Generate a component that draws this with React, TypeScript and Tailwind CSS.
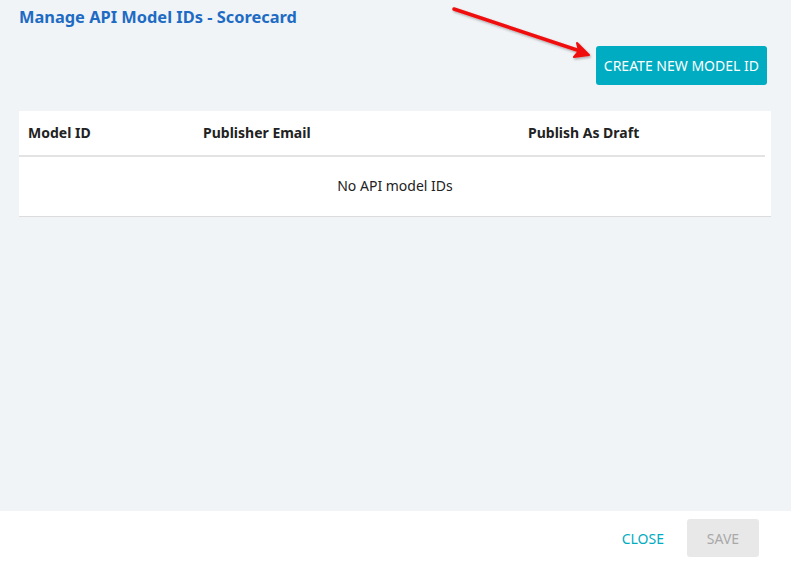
import React from "react";

export default function App() {
  return (
    <div
      className="relative flex h-[561px] w-[791px] flex-col overflow-hidden bg-[#f0f4f7]"
      style={{ fontFamily: '"Noto Sans", "Open Sans", sans-serif' }}
    >
      <div className="flex flex-1 flex-col pl-[19px] pr-[20px]">
        <h1 className="mt-[5px] h-[24px] text-[16.4px] font-bold leading-[24px] text-[#1e6bc4]">
          Manage API Model IDs - Scorecard
        </h1>
        <div className="mt-[17px] flex justify-end pr-[4px]">
          <button className="h-[39px] rounded-[3px] bg-[#00acc1] px-[8px] text-[14px] leading-[39px] text-white">
            CREATE NEW MODEL ID
          </button>
        </div>
        <div className="mt-[26px] bg-white border-b border-[#dcdcdc]">
          <div className="mr-[6px] grid h-[46px] grid-cols-[175px_325px_1fr] items-center border-b-2 border-[#e3e3e3] pb-[2px] pl-[9px] text-[14px] font-bold text-[#222]">
            <div>Model ID</div>
            <div>Publisher Email</div>
            <div>Publish As Draft</div>
          </div>
          <div className="flex h-[59px] items-center justify-center pb-[2px] text-[14px] text-[#222]">
            No API model IDs
          </div>
        </div>
      </div>
      <div className="flex h-[50px] items-start justify-end bg-white pr-[32px] pt-[8px]">
        <button className="mr-[23px] h-[38px] text-[14px] text-[#00acc1]">CLOSE</button>
        <button className="h-[38px] w-[72px] rounded-[3px] bg-[#e8e8e8] text-[14px] text-[#a9a9a9]">
          SAVE
        </button>
      </div>
      <svg
        className="pointer-events-none absolute left-0 top-0"
        width="791"
        height="561"
        viewBox="0 0 791 561"
      >
        <defs>
          <filter id="sh" x="-20%" y="-20%" width="140%" height="140%">
            <feDropShadow dx="1" dy="1.5" stdDeviation="1" floodColor="#000" floodOpacity="0.3" />
          </filter>
        </defs>
        <g filter="url(#sh)">
          <line x1="454" y1="9" x2="580" y2="51" stroke="#f01010" strokeWidth="3.5" strokeLinecap="round" />
          <path d="M589 55 L574 57 L579 51 L577 43 Z" fill="#f01010" stroke="#f01010" strokeWidth="2" strokeLinejoin="round" />
        </g>
      </svg>
    </div>
  );
}
